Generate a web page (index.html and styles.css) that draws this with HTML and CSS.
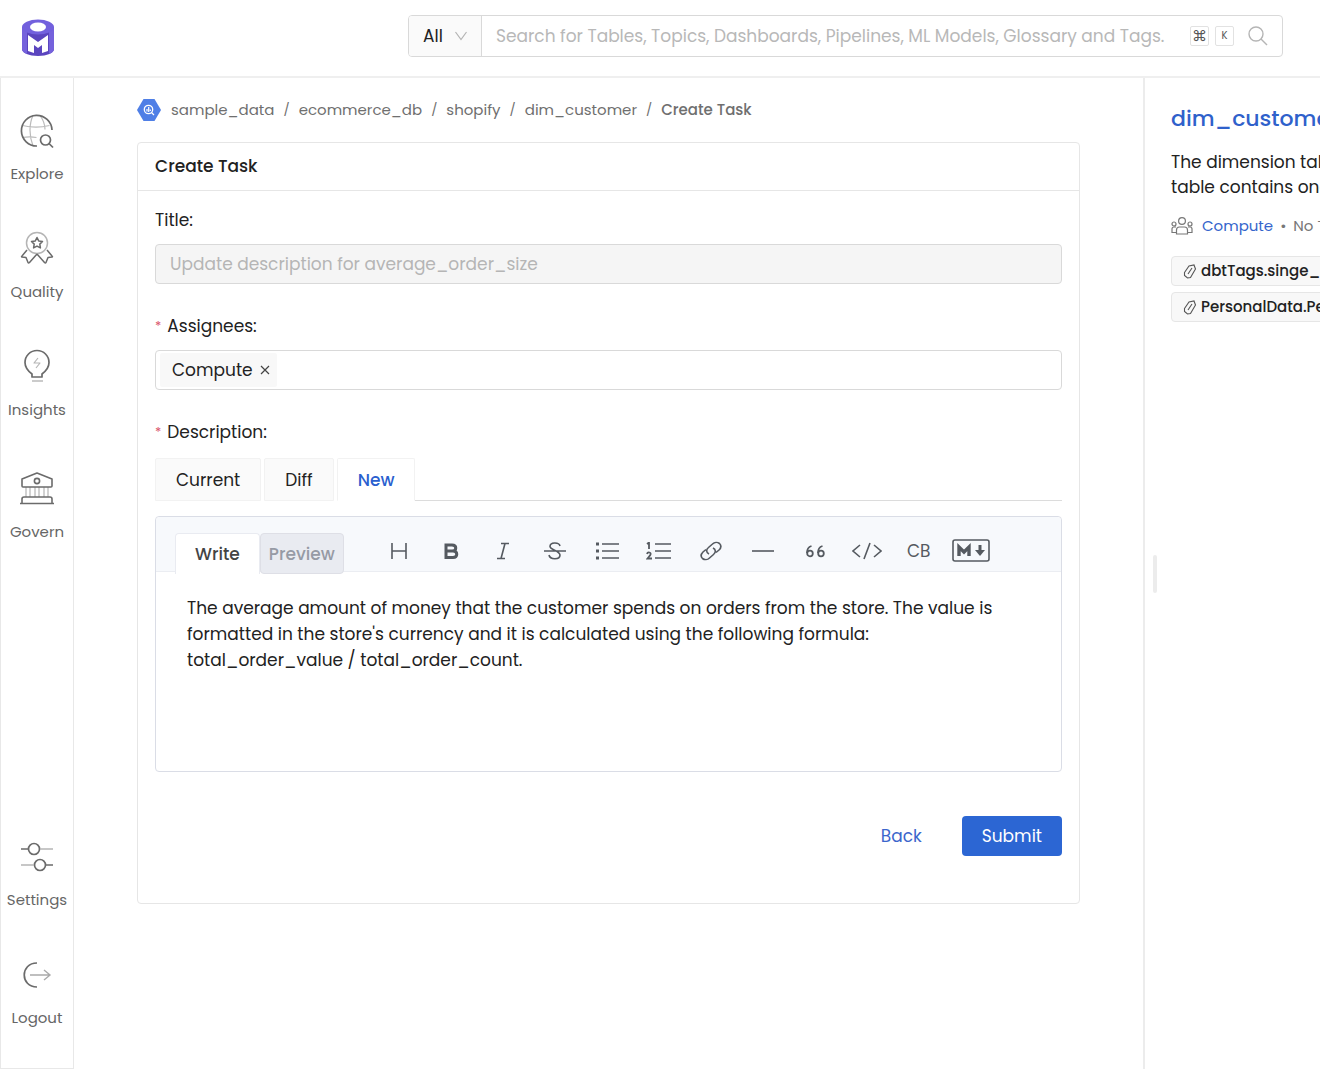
FILE: index.html
```html
<!DOCTYPE html>
<html lang="en">
<head>
<meta charset="utf-8">
<meta name="viewport" content="width=device-width, initial-scale=1">
<title>Create Task</title>
<link rel="stylesheet" href="styles.css">
</head>
<body>
<div class="app">
  <header class="topbar">
    <a class="logo" href="#" aria-label="Home">
      <svg width="32" height="38" viewBox="0 0 32 38">
        <path d="M0 8v22c0 4 7 7 16 7s16-3 16-7V8z" fill="#5b45bf"/>
        <path d="M0 8v22c0 2 2 4 5 5V12zM32 8v22c0 2-2 4-5 5V12z" fill="#7562dc"/>
        <ellipse cx="16" cy="8" rx="16" ry="7.500" fill="#7260dd"/>
        <ellipse cx="16" cy="8" rx="8" ry="4.500" fill="#fff"/>
        <path d="M6 16l10 7 10-7v16l-6 2v-8l-4 3-4-3v8l-6-2z" fill="#fff"/>
      </svg>
    </a>
    <form class="search" role="search">
      <label class="scope">
        <select class="scope-select" aria-label="Search scope"><option>All</option></select>
        <svg class="scope-arrow" width="12" height="10" viewBox="0 0 12 10" fill="none" stroke="#b3b3b3" stroke-width="1.200"><path d="M.5 1L6 8.500 11.500 1"/></svg>
      </label>
      <input class="search-input" type="text" aria-label="Search" placeholder="Search for Tables, Topics, Dashboards, Pipelines, ML Models, Glossary and Tags.">
      <span class="keys"><kbd class="key key-cmd">⌘</kbd><kbd class="key">K</kbd></span>
      <button class="search-button" type="button" aria-label="Search">
        <svg width="20" height="20" viewBox="0 0 20 20" fill="none" stroke="#b5b5b5" stroke-width="1.400"><circle cx="8" cy="8" r="7"/><path d="M13 13l6 6"/></svg>
      </button>
    </form>
  </header>

  <nav class="sidebar">
    <div class="nav-group">
      <a class="nav-item" href="#">
        <svg class="nav-icon" viewBox="0 0 36 36" fill="none" stroke="#6b6b6b" stroke-width="1.700">
          <g stroke="#bbb" stroke-width="1.200"><path d="M14 2.500C10 11 10 23 14 33M21 2.500c3 4 5 9 5 14M3.500 12.500c8 2 19 2 27 0M3.500 24.500c5-1 9-1 14 0"/></g>
          <path d="M18 33A15.300 15.300 0 1 1 33 17"/><circle cx="26.500" cy="27" r="5"/><path d="M30 30.500l4 4"/>
        </svg>
        <span>Explore</span>
      </a>
      <a class="nav-item" href="#">
        <svg class="nav-icon" viewBox="0 0 36 36" fill="none" stroke="#6b6b6b" stroke-width="1.500" stroke-linejoin="round">
          <circle cx="18" cy="12" r="10.500" stroke="#b5b5b5"/>
          <path d="M18 6.500l1.700 3.400 3.800.600-2.700 2.600.600 3.800-3.400-1.800-3.400 1.800.600-3.800-2.700-2.600 3.800-.600z"/>
          <path d="M8 19l-5 6q-1 1 0 1l4 .500 2 5q.500 1 1.500 0L18 23M28 19l5 6q1 1 0 1l-4 .500-2 5q-.500 1-1.500 0L18 23"/>
        </svg>
        <span>Quality</span>
      </a>
      <a class="nav-item" href="#">
        <svg class="nav-icon" viewBox="0 0 36 36" fill="none" stroke="#6b6b6b" stroke-width="1.700" stroke-linejoin="round">
          <path d="M13 28v-3C9 22 6 19 6 13.500a12 12 0 0 1 24 0C30 19 27 22 23 25v3z"/>
          <path d="M19 9l-4 5h6l-4 5" stroke="#b5b5b5" stroke-width="1.200"/><path d="M13 32h11" stroke="#b5b5b5" stroke-width="1.400"/>
        </svg>
        <span>Insights</span>
      </a>
      <a class="nav-item" href="#">
        <svg class="nav-icon nav-icon-tall" viewBox="0 0 36 40" fill="none" stroke="#6b6b6b" stroke-width="1.600" stroke-linejoin="round">
          <path d="M7 20v10M11 20v10M16 20v10M20 20v10M25 20v10M29 20v10" stroke="#b5b5b5" stroke-width="1.200"/>
          <path d="M3 19v-7L18 6l15 6v7q0 1-1 1H4q-1 0-1-1zM3 36v-4q0-2 2-2h26q2 0 2 2v4M1 36.500h34"/><circle cx="18" cy="14" r="2.600"/>
        </svg>
        <span>Govern</span>
      </a>
    </div>
    <div class="nav-group">
      <a class="nav-item" href="#">
        <svg class="nav-icon" viewBox="0 0 36 36" fill="none" stroke="#6b6b6b" stroke-width="1.700">
          <circle cx="15" cy="10" r="5.500"/><circle cx="21" cy="26" r="5.500"/><path d="M2 10h7M27 26h7"/><path d="M21 10h13M2 26h13" stroke="#b5b5b5" stroke-width="1.300"/>
        </svg>
        <span>Settings</span>
      </a>
      <a class="nav-item" href="#">
        <svg class="nav-icon" viewBox="0 0 36 36" fill="none" stroke="#6b6b6b" stroke-width="1.700">
          <path d="M18 6C1 6 1 30 18 30"/><path d="M11 18h20M25 13l6 5-6 5" stroke="#aaa" stroke-width="1.400"/>
        </svg>
        <span>Logout</span>
      </a>
    </div>
  </nav>

  <main class="main">
    <nav class="breadcrumb" aria-label="Breadcrumb">
      <svg class="crumb-logo" width="24" height="22" viewBox="0 0 24 22"><path d="M6.500 0h11L24 11l-6.500 11h-11L0 11z" fill="#4f7fe6"/><circle cx="11.500" cy="10.500" r="4.200" fill="none" stroke="#fff" stroke-width="1.300"/><path d="M10 10v2.500M11.700 8v5M13.300 10.500v1.500M14.500 13.500l2.500 2.500" stroke="#fff" stroke-width="1.200"/></svg>
      <a href="#">sample_data</a><span class="slash">/</span>
      <a href="#">ecommerce_db</a><span class="slash">/</span>
      <a href="#">shopify</a><span class="slash">/</span>
      <a href="#">dim_customer</a><span class="slash">/</span>
      <span class="current">Create Task</span>
    </nav>

    <section class="card">
      <h1 class="card-title">Create Task</h1>
      <form class="card-body">
        <div class="field">
          <label class="label" for="title">Title:</label>
          <input class="input" id="title" type="text" disabled value="Update description for average_order_size">
        </div>
        <div class="field">
          <label class="label required" for="assignees">Assignees:</label>
          <div class="select-box">
            <span class="chip">Compute
              <button class="chip-remove" type="button" aria-label="Remove Compute"><svg width="10" height="10" viewBox="0 0 10 10" stroke="#444" stroke-width="1.200"><path d="M1 1l8 8M9 1L1 9"/></svg></button>
            </span>
            <input class="chip-input" id="assignees" type="text">
          </div>
        </div>
        <div class="field">
          <label class="label required" for="description">Description:</label>
          <div class="tabs" role="tablist">
            <button class="tab" type="button" role="tab">Current</button>
            <button class="tab" type="button" role="tab">Diff</button>
            <button class="tab active" type="button" role="tab" aria-selected="true">New</button>
            <span class="tab-line"></span>
          </div>
          <div class="editor">
            <div class="toolbar">
              <button class="mode mode-active" type="button">Write</button>
              <button class="mode" type="button">Preview</button>
              <div class="tools">
                <button class="tool" type="button" aria-label="Heading"><svg width="18" height="18" viewBox="0 0 18 18"><path d="M2 1v16M16 1v16M2 9h14"/></svg></button>
                <button class="tool" type="button" aria-label="Bold"><svg width="18" height="18" viewBox="0 0 18 18"><path d="M4 3h6c5 0 5 6 0 6H4zM4 9h7c5 0 5 6.500 0 6.500H4z" stroke-width="3"/></svg></button>
                <button class="tool" type="button" aria-label="Italic"><svg width="18" height="18" viewBox="0 0 18 18"><path d="M7 1.500h8M3 16.500h8M11 1.500l-4 15"/></svg></button>
                <button class="tool" type="button" aria-label="Strikethrough"><svg width="22" height="18" viewBox="0 0 22 18"><path d="M16 4c-1-4-10-4-10 .500C6 8 16 8.500 16 13c0 5-10 5-11 0M0 9h22"/></svg></button>
                <button class="tool" type="button" aria-label="Bulleted list"><svg width="24" height="18" viewBox="0 0 24 18"><path d="M7 2h17M7 9h17M7 16h17"/><path d="M1 2h3M1 9h3M1 16h3" stroke-width="3"/></svg></button>
                <button class="tool" type="button" aria-label="Numbered list"><svg width="26" height="18" viewBox="0 0 26 18"><path d="M9 2h16M9 9h16M9 16h16"/><path d="M1 2l2-1.500V7M1 12q.500-2 2.500-1.500c2 .500 1 2.500 0 3.500l-2 2.500H6" stroke-width="1.800"/></svg></button>
                <button class="tool" type="button" aria-label="Link"><svg width="24" height="20" viewBox="0 0 24 20"><path d="M10 13c-3-1.500-3-4.500-.500-6.500l4-3.500c2-2 5-2 7-.500 2 2 1.500 4.500-.500 6.500l-3 2.500M14 7c3 1.500 3 4.500.500 6.500l-4 3.500c-2 2-5 2-7 .500-2-2-1.500-4.500.500-6.500l3-2.500"/></svg></button>
                <button class="tool" type="button" aria-label="Horizontal rule"><svg width="22" height="18" viewBox="0 0 22 18"><path d="M0 9h22"/></svg></button>
                <button class="tool" type="button" aria-label="Quote"><svg width="20" height="14" viewBox="0 0 20 14"><path d="M6.500 2C3 3 2 6 2 9M13 9c0-3 1-6 4.500-7" stroke-width="1.800"/><circle cx="5" cy="9.500" r="2.800" stroke-width="1.800"/><circle cx="16" cy="9.500" r="2.800" stroke-width="1.800"/></svg></button>
                <button class="tool" type="button" aria-label="Code"><svg width="30" height="18" viewBox="0 0 30 18"><path d="M8 3L1 9l7 6M22 3l7 6-7 6M18 1l-6 16"/></svg></button>
                <button class="tool" type="button" aria-label="Code block">CB</button>
                <button class="tool" type="button" aria-label="Markdown"><svg width="38" height="24" viewBox="0 0 38 24"><rect x="1" y="1" width="36" height="21" rx="2"/><path d="M7 17V8l5 5 5-5v9" stroke-width="3.400"/><path d="M28 6v7" stroke-width="3"/><path d="M23 11h10l-5 6z" fill="#555a60" stroke="none"/></svg></button>
              </div>
            </div>
            <textarea class="text" id="description">The average amount of money that the customer spends on orders from the store. The value is formatted in the store's currency and it is calculated using the following formula: total_order_value / total_order_count.</textarea>
          </div>
        </div>
        <div class="actions">
          <button class="button button-link" type="button">Back</button>
          <button class="button button-primary" type="submit">Submit</button>
        </div>
      </form>
    </section>
  </main>

  <aside class="panel">
    <div class="grip"></div>
    <div class="panel-body">
      <a class="entity" href="#">dim_customer</a>
      <p class="summary">The dimension table<br>table contains one</p>
      <div class="meta">
        <svg width="22" height="18" viewBox="0 0 22 18" fill="none" stroke="#777" stroke-width="1.200"><circle cx="11" cy="4" r="3.400"/><circle cx="3" cy="7" r="2"/><circle cx="19" cy="7" r="2"/><path d="M5.500 17v-4q0-3 3-3h5q3 0 3 3v4zM5 15.500H1V12q0-2 2-2h2M17 15.500h4V12q0-2-2-2h-2"/></svg>
        <a href="#">Compute</a><span>•</span><span>No Tier</span>
      </div>
      <ul class="tags">
        <li class="tag"><svg width="14" height="15" viewBox="0 0 14 15" fill="none" stroke="#555" stroke-width="1.100"><path d="M1.500 8.500L6 2l5-1 1.500 4-5 8.500-3 .5-3-2.500zM5 10l4-6"/></svg>dbtTags.singe_tag</li>
        <li class="tag"><svg width="14" height="15" viewBox="0 0 14 15" fill="none" stroke="#555" stroke-width="1.100"><path d="M1.500 8.500L6 2l5-1 1.500 4-5 8.500-3 .5-3-2.500zM5 10l4-6"/></svg>PersonalData.Personal</li>
      </ul>
    </div>
  </aside>
</div>
</body>
</html>
```
FILE: styles.css
```css
* { box-sizing: border-box; }

body {
  margin: 0;
  background: #fff;
  color: #222;
  font: 17px/24px Poppins, Inter, sans-serif;
}

button, input, select, textarea { font: inherit; color: inherit; margin: 0; }
button { cursor: pointer; }
a { color: inherit; text-decoration: none; }
svg { display: block; flex: none; }

.app {
  display: grid;
  grid-template: auto 1fr / 74px minmax(0, 1fr) 177px;
  min-height: 100vh;
}

/* Top bar */
.topbar {
  grid-column: 1 / -1;
  display: flex;
  align-items: center;
  justify-content: space-between;
  padding: 15px 37px 19px 22px;
  border-bottom: 2px solid #efefef;
}
.logo { padding-top: 4px; }
.search {
  display: flex;
  align-items: center;
  width: 100%;
  max-width: 875px;
  height: 42px;
  border: 1px solid #d9d9d9;
  border-radius: 4px;
  overflow: hidden;
}
.scope {
  display: flex;
  align-items: center;
  height: 100%;
  padding: 0 14px;
  background: #fafafa;
  border-right: 1px solid #d9d9d9;
}
.scope-select {
  appearance: none;
  width: 32px;
  padding: 0;
  border: 0;
  background: none;
}
.search-input {
  flex: 1;
  min-width: 0;
  padding: 0 0 0 14px;
  border: 0;
  outline: 0;
  background: none;
}
.search-input::placeholder { color: #b8b8b8; opacity: 1; }
.keys { display: flex; gap: 6px; }
.key {
  display: grid;
  place-items: center;
  width: 19px;
  height: 20px;
  border: 1px solid #e2e2e2;
  border-radius: 2px;
  color: #555;
  font: 10px/18px Poppins, Inter, sans-serif;
}
.key-cmd { font-size: 15px; }
.search-button { padding: 0 14px; border: 0; background: none; }

/* Sidebar */
.sidebar {
  display: flex;
  flex-direction: column;
  justify-content: space-between;
  padding: 35px 0 38px;
  border: 1px solid #e8e8e8;
  border-top: 0;
}
.nav-group { display: flex; flex-direction: column; gap: 45px; }
.nav-item {
  display: flex;
  flex-direction: column;
  align-items: center;
  gap: 13px;
  color: #666;
  font-size: 15px;
}
.nav-icon { width: 36px; height: 36px; }
.nav-icon-tall { height: 40px; }

/* Main column */
.main { padding: 20px 63px 40px; }
.breadcrumb {
  display: flex;
  align-items: center;
  height: 24px;
  color: #6f6f6f;
  font-size: 15px;
}
.crumb-logo { margin-right: 10px; }
.slash { margin: 0 9px; font-size: 13px; }
.current { font-weight: 500; }

.card {
  margin-top: 20px;
  border: 1px solid #e6e6e6;
  border-radius: 4px;
}
.card-title {
  margin: 0;
  padding: 11px 17px 12px;
  border-bottom: 1px solid #e6e6e6;
  font-size: 17px;
  font-weight: 500;
}
.card-body { padding: 17px 17px 47px; }
.field { margin-bottom: 30px; }
.label { display: block; margin-bottom: 12px; }
.required::before {
  content: "*";
  margin-right: 6px;
  color: #d9546a;
  font-size: 13px;
  line-height: 1;
  vertical-align: 2px;
}
.input {
  display: block;
  width: 100%;
  height: 40px;
  padding: 0 14px;
  border: 1px solid #d9d9d9;
  border-radius: 4px;
}
.input:disabled { background: #f5f5f5; color: #b5b5b5; }
.select-box {
  display: flex;
  align-items: center;
  height: 40px;
  padding: 0 4px;
  border: 1px solid #d9d9d9;
  border-radius: 4px;
}
.chip {
  display: flex;
  align-items: center;
  gap: 7px;
  height: 34px;
  padding: 0 7px 0 12px;
  background: #f8f8f8;
  border-radius: 2px;
}
.chip-remove { padding: 0; border: 0; background: none; }
.chip-input { flex: 1; min-width: 0; border: 0; outline: 0; background: none; }

/* Description tabs */
.tabs { display: flex; gap: 3px; margin: 14px 0 15px; }
.tab {
  height: 43px;
  padding: 0 20px;
  border: 1px solid #f2f2f2;
  border-radius: 2px 2px 0 0;
  background: #fafafa;
}
.tab.active {
  margin-right: -3px;
  border-bottom-color: #fff;
  background: #fff;
  color: #2a5fcf;
  font-weight: 500;
}
.tab-line { flex: 1; border-bottom: 1px solid #dcdcdc; }

/* Editor */
.editor { border: 1px solid #dadde6; border-radius: 4px; }
.toolbar {
  display: flex;
  height: 55px;
  padding: 16px 19px 0;
  background: #f7f9fc;
  border-bottom: 1px solid #ebedf2;
  border-radius: 4px 4px 0 0;
}
.mode {
  height: 41px;
  padding: 0 8px;
  border: 1px solid #dedfe6;
  border-radius: 4px;
  background: #e9ebf1;
  color: #969aa5;
  font-weight: 500;
}
.mode-active {
  padding: 0 19px;
  border-color: #e9ebf1;
  border-bottom: 0;
  border-radius: 4px 4px 0 0;
  background: #fff;
  color: #444;
}
.tools { display: flex; height: 36px; margin-left: 29px; }
.tool {
  display: grid;
  place-items: center;
  width: 52px;
  padding: 0;
  border: 0;
  background: none;
  color: #555a60;
}
.tool svg { fill: none; stroke: #555a60; stroke-width: 1.6; }
.text {
  display: block;
  width: 100%;
  height: 199px;
  padding: 23px 50px 23px 31px;
  border: 0;
  outline: 0;
  resize: none;
  background: none;
  line-height: 26px;
}

.actions {
  display: flex;
  justify-content: flex-end;
  gap: 20px;
  margin-top: 44px;
}
.button {
  height: 40px;
  padding: 0 19px;
  border: 1px solid transparent;
  border-radius: 4px;
  background: none;
}
.button-link { color: #3c66cc; }
.button-primary { background: #2c66d3; color: #fff; }

/* Right panel */
.panel {
  display: flex;
  align-items: center;
  min-width: 0;
  border-left: 2px solid #ececec;
  overflow: hidden;
}
.grip { flex: none; width: 4px; height: 38px; margin-left: 8px; border-radius: 2px; background: #ececec; }
.panel-body {
  align-self: flex-start;
  padding: 25px 0 0 14px;
  white-space: nowrap;
}
.entity { display: block; color: #2f61cb; font-size: 22px; font-weight: 500; line-height: 32px; }
.summary { margin: 15px 0 14px; line-height: 25px; }
.meta {
  display: flex;
  align-items: center;
  gap: 7px;
  color: #777;
  font-size: 15px;
}
.meta a { margin-left: 2px; color: #3565cc; }
.tags {
  display: flex;
  flex-direction: column;
  align-items: flex-start;
  gap: 6px;
  margin: 18px 0 0;
  padding: 0;
  list-style: none;
}
.tag {
  display: flex;
  align-items: center;
  gap: 4px;
  height: 30px;
  padding: 0 11px;
  border: 1px solid #e6e6e6;
  border-radius: 4px;
  background: #f8f8f8;
  font-size: 15px;
  font-weight: 500;
}
```
